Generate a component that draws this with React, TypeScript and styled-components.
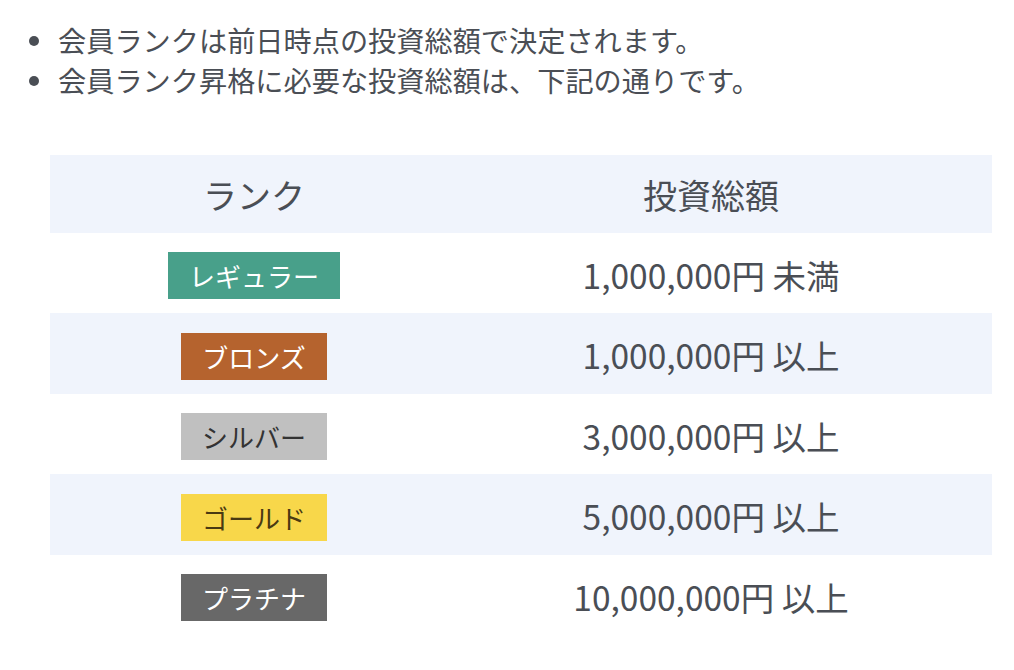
import React from "react";
import styled, { createGlobalStyle } from "styled-components";

const Global = createGlobalStyle`
  html, body { margin: 0; padding: 0; background: #fff; }
  body { font-family: "Noto Sans CJK JP", "Noto Sans", sans-serif; color: #4a4e55; }
`;

const Page = styled.div`
  padding: 20px 22px 0 50px;
  width: 1014px;
  box-sizing: border-box;
`;

const Notes = styled.ul`
  list-style: none;
  margin: 0;
  padding: 0;
`;

const Note = styled.li`
  position: relative;
  padding-left: 8px;
  font-size: 28.2px;
  line-height: 40px;
  height: 40px;
  white-space: nowrap;
  &::before {
    content: "";
    position: absolute;
    left: -21px;
    top: 16px;
    width: 10px;
    height: 10px;
    border-radius: 50%;
    background: #4a4e55;
  }
`;

const Table = styled.div`
  margin-top: 55px;
  width: 942px;
  display: grid;
  grid-template-columns: 408px 1fr;
`;

const Row = styled.div<{ $shaded?: boolean; $h: number }>`
  display: contents;
  & > div {
    background: ${(p) => (p.$shaded ? "#f0f4fc" : "#ffffff")};
    height: ${(p) => p.$h}px;
  }
`;

const Cell = styled.div<{ $right?: boolean }>`
  display: flex;
  align-items: center;
  justify-content: center;
  padding-right: ${(p) => (p.$right ? "28px" : "0")};
`;

const HeadText = styled.span`
  font-size: 34px;
  color: #4a4e55;
`;

const Amount = styled.span`
  font-size: 33.5px;
  color: #4a4e55;
  margin-top: 2px;
`;

const Badge = styled.span<{ $bg: string; $fg: string }>`
  display: inline-flex;
  align-items: center;
  justify-content: center;
  height: 47px;
  margin-top: 5px;
  padding: 0 21px;
  font-size: 26px;
  background: ${(p) => p.$bg};
  color: ${(p) => p.$fg};
`;

const ranks = [
  { name: "レギュラー", bg: "#48a08a", fg: "#ffffff", amount: "1,000,000円 未満" },
  { name: "ブロンズ", bg: "#b5632e", fg: "#ffffff", amount: "1,000,000円 以上" },
  { name: "シルバー", bg: "#c0c0c0", fg: "#333333", amount: "3,000,000円 以上" },
  { name: "ゴールド", bg: "#f8d74a", fg: "#4a3a12", amount: "5,000,000円 以上" },
  { name: "プラチナ", bg: "#686868", fg: "#ffffff", amount: "10,000,000円 以上" },
];

export default function App() {
  return (
    <Page>
      <Global />
      <Notes>
        <Note>会員ランクは前日時点の投資総額で決定されます。</Note>
        <Note>会員ランク昇格に必要な投資総額は、下記の通りです。</Note>
      </Notes>
      <Table>
        <Row $shaded $h={78}>
          <Cell>
            <HeadText>ランク</HeadText>
          </Cell>
          <Cell $right>
            <HeadText>投資総額</HeadText>
          </Cell>
        </Row>
        {ranks.map((r, i) => (
          <Row key={r.name} $shaded={i % 2 === 1} $h={i % 2 === 0 ? 80 : 81}>
            <Cell>
              <Badge $bg={r.bg} $fg={r.fg}>
                {r.name}
              </Badge>
            </Cell>
            <Cell $right>
              <Amount>{r.amount}</Amount>
            </Cell>
          </Row>
        ))}
      </Table>
    </Page>
  );
}
